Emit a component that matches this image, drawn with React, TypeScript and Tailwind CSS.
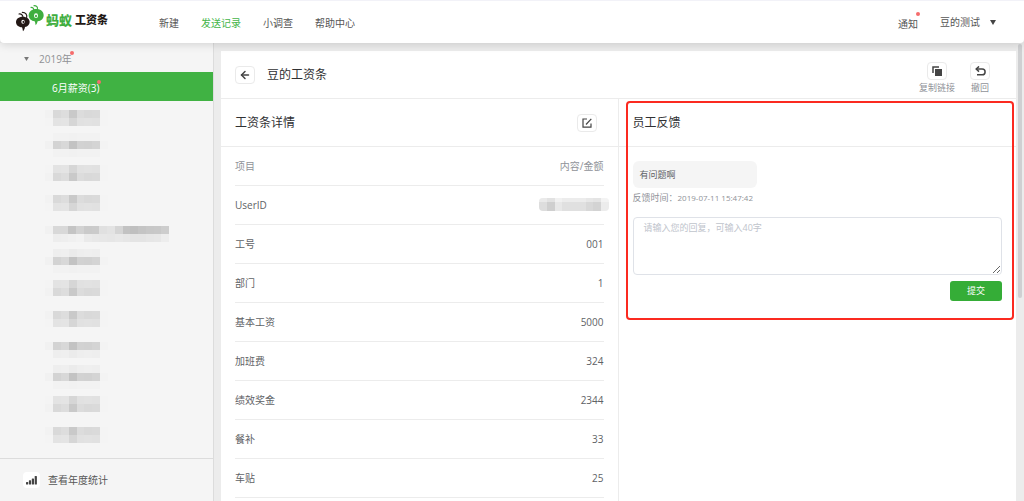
import { ArrowLeft } from "lucide-react";
import type { ReactNode } from "react";

const nav = ["新建", "发送记录", "小调查", "帮助中心"];

const items = [
	{ label: "工号", value: "001" },
	{ label: "部门", value: "1" },
	{ label: "基本工资", value: "5000" },
	{ label: "加班费", value: "324" },
	{ label: "绩效奖金", value: "2344" },
	{ label: "餐补", value: "33" },
	{ label: "车贴", value: "25" },
];

// masked names, one hex pair (grey level) per cell
const dark = "f1 d3 d8 c3 d2 d1 d4 f3";
const mid = "f2 d9 dd c9 dc d9 da f4";
const soft = "f4 e3 e4 d6 e1 e2 e1 f4";
const pale = "f5 ee ef eb ee ef ee f5";
const faint = "f5 f2 f2 f1 f2 f2 f2 f5";

const months = [
	{ pad: "pt-[9px]", rows: [mid, soft] },
	{ pad: "pt-[3px]", rows: [faint, dark, faint] },
	{ pad: "pt-[6px]", rows: [soft, mid] },
	{ pad: "pt-[7px]", rows: [mid, soft] },
	{
		pad: "pt-[9px]",
		rows: [
			"f1 d8 d8 c4 d2 ca cb e0 e3 d5 c2 bf c4 c7 c8 cd",
			"f5 ed ee f0 f2 ea e8 e7 e6 e8 e6 e4 e4 e6 e7 ed",
		],
	},
	{ pad: "pt-[3px]", rows: [pale, dark, faint] },
	{ pad: "pt-[5px]", rows: [soft, mid] },
	{ pad: "pt-[7px]", rows: [mid, soft] },
	{ pad: "pt-[9px]", rows: [dark, pale] },
	{ pad: "pt-[3px]", rows: [pale, dark, faint] },
	{ pad: "pt-[5px]", rows: [soft, mid] },
	{ pad: "pt-[7px]", rows: [mid, soft] },
];

export default function App() {
	return (
		<div className="h-screen min-h-[501px] flex flex-col overflow-hidden bg-[#ececec] text-[10px] leading-4 text-[#606266] font-['Open_Sans','Noto_Sans_CJK_SC',sans-serif]">
			<Header />
			<div className="flex-1 min-h-0 flex">
				<Sidebar />
				<main className="flex-1 min-w-0 pt-2 pl-[7px] flex">
					<section className="flex-1 min-w-0 bg-white flex flex-col">
						<TitleBar />
						<div className="flex-1 grid grid-cols-2">
							<Detail />
							<Feedback />
						</div>
					</section>
				</main>
				<div className="w-2 pt-px flex justify-center">
					<div className="w-1 h-[254px] rounded-full bg-[#cfd0d2]" />
				</div>
			</div>
		</div>
	);
}

function Header() {
	return (
		<header className="relative z-10 shrink-0 h-[43px] pl-[15px] pr-7 flex items-center bg-white border-t border-[#f2f2f8] rounded-b shadow-[0_2px_8px_rgba(0,0,0,0.13)]">
			<a href="#" className="w-36 pb-2 flex items-center">
				<Logo />
				<span className="ml-[2px] pt-1 flex items-center font-black leading-5">
					<span className="text-[13px] text-[#3fae3f]">蚂蚁</span>
					<span className="ml-[3px] text-[11px] text-[#231815]">工资条</span>
				</span>
			</a>
			<nav className="flex gap-[22px] pt-px">
				{nav.map((n) => (
					<a key={n} href="#" className={n === "发送记录" ? "text-[#44b549]" : "text-[#555]"}>
						{n}
					</a>
				))}
			</nav>
			<div className="ml-auto flex items-center gap-[22px] text-[#555]">
				<a href="#" className="relative pt-1">
					通知
					<Dot />
				</a>
				<button className="flex items-center gap-[10px]">
					豆的测试
					<svg viewBox="0 0 6 5" className="w-[6px] h-[5px]">
						<path d="M0 0h6L3 5z" fill="#444" />
					</svg>
				</button>
			</div>
		</header>
	);
}

function Sidebar() {
	return (
		<aside className="w-[214px] shrink-0 bg-[#f5f5f5] border-r border-[#dcdcdc] flex flex-col">
			<button className="h-[29px] shrink-0 pl-6 pt-[2px] flex items-center text-[#8f9194]">
				<svg viewBox="0 0 6 5" className="w-[5px] h-[4px]">
					<path d="M0 0h6L3 5z" fill="#777" />
				</svg>
				<span className="relative ml-[10px]">
					2019年
					<Dot />
				</span>
			</button>
			<button className="h-[29px] shrink-0 pl-[52px] pt-[2px] flex items-center bg-[#40b243] text-white">
				<span className="relative">
					6月薪资(3)
					<Dot />
				</span>
			</button>
			<div className="flex-1 min-h-0 overflow-hidden">
				{months.map((m, i) => (
					<button key={i} className={`h-[29px] w-full pl-[45px] flex items-start ${m.pad}`}>
						<Mosaic rows={m.rows} />
					</button>
				))}
			</div>
			<button className="h-[43px] shrink-0 pl-[23px] flex items-center gap-2 border-t border-[#dcdcdc] text-[#555]">
				<span className="w-[17px] h-4 flex items-center justify-center bg-white rounded-sm">
					<svg viewBox="0 0 11 9" className="w-[11px] h-[9px]" fill="#444">
						<rect x="0" y="6" width="2.2" height="2.6" rx=".6" />
						<rect x="2.9" y="4.2" width="2.2" height="4.4" rx=".6" />
						<rect x="5.8" y="2.4" width="2.2" height="6.2" rx=".6" />
						<rect x="8.7" y="0" width="2.2" height="8.6" rx=".6" />
					</svg>
				</span>
				查看年度统计
			</button>
		</aside>
	);
}

function TitleBar() {
	return (
		<div className="h-12 shrink-0 pl-[14px] pr-[26px] flex items-center border-b border-[#ececec]">
			<IconButton label="返回">
				<ArrowLeft className="w-3 h-3" strokeWidth={3} />
			</IconButton>
			<h1 className="ml-3 text-[12px] text-[#303133]">豆的工资条</h1>
			<div className="ml-auto pt-[8px] flex gap-[15px] text-[9px] leading-[14px] text-[#909399]">
				<div className="flex flex-col items-center gap-px">
					<IconButton label="复制链接">
						<svg viewBox="0 0 10 10" className="w-[10px] h-[10px]">
							<path d="M1 7V1h6" fill="none" stroke="#444" strokeWidth="1.5" />
							<path d="M3 3h7v7H3z" fill="#444" />
						</svg>
					</IconButton>
					<span>复制链接</span>
				</div>
				<div className="flex flex-col items-center gap-px">
					<IconButton label="撤回">
						<svg viewBox="0 0 11 10" className="w-[11px] h-[10px]" fill="none" stroke="#444" strokeWidth="1.5">
							<path d="M4 .4 1.2 3 4 5.6" />
							<path d="M1.4 3h5.8a2.9 2.9 0 0 1 0 5.8H2" />
						</svg>
					</IconButton>
					<span>撤回</span>
				</div>
			</div>
		</div>
	);
}

function Detail() {
	return (
		<div className="border-r border-[#ececec]">
			<div className="h-12 pl-[14px] pr-[21px] flex items-center justify-between border-b border-[#ececec]">
				<h2 className="text-[12px] text-[#303133]">工资条详情</h2>
				<IconButton label="编辑">
					<svg viewBox="0 0 10 10" className="w-[10px] h-[10px]" fill="none" stroke="#444" strokeWidth="1.2">
						<path d="M5 1H1v8.2h8V5.5" />
						<path d="M4 6.5 9.3.8" />
					</svg>
				</IconButton>
			</div>
			<div className="px-[14px]">
				<table className="w-full">
					<thead>
						<tr className="h-[38px] border-b border-[#ececec] text-[#909399]">
							<th className="text-left font-normal">项目</th>
							<th className="text-right font-normal">内容/金额</th>
						</tr>
					</thead>
					<tbody>
						<tr className="h-[39px] border-b border-[#ececec]">
							<td>UserID</td>
							<td>
								<div className="flex justify-end -mr-[5px]">
									<svg
										viewBox="0 0 9 13"
										preserveAspectRatio="none"
										shapeRendering="crispEdges"
										className="w-[70px] h-[13px] rounded"
									>
										{["dd", "cf", "e8", "e0", "e0", "e0", "d8", "d3", "ec"].map((c, i) => (
											<rect key={i} x={i} width="1" height="13" fill={`#${c}${c}${c}`} />
										))}
										<path d="M0 0h9v4H0z" fill="#fff" opacity=".4" />
									</svg>
								</div>
							</td>
						</tr>
						{items.map((it) => (
							<tr key={it.label} className="h-[39px] border-b border-[#ececec]">
								<td>{it.label}</td>
								<td className="text-right">{it.value}</td>
							</tr>
						))}
					</tbody>
				</table>
			</div>
		</div>
	);
}

function Feedback() {
	return (
		<div className="relative">
			<div className="h-12 px-[14px] flex items-center border-b border-[#ececec]">
				<h2 className="text-[12px] text-[#303133]">员工反馈</h2>
			</div>
			<div className="px-[14px] pt-[14px] flex flex-col">
				<p className="w-[124px] h-[27px] px-[7px] flex items-center rounded-md bg-[#f5f5f5] text-[9px]">有问题啊</p>
				<p className="mt-1 flex items-center text-[9px] leading-3 text-[#909399]">
					反馈时间：<span className="text-[8px]">2019-07-11 15:47:42</span>
				</p>
				<textarea
					aria-label="回复"
					placeholder="请输入您的回复，可输入40字"
					className="mt-[13px] h-[58px] px-[10px] py-1 rounded-sm border border-[#dfe2e8] text-[9px] leading-3 placeholder:text-[#c0c4cc] focus:outline-none"
				/>
				<button className="mt-[6px] self-end w-[52px] h-5 rounded-[3px] bg-[#35ad37] text-white text-[9px]">提交</button>
			</div>
			<div className="absolute left-[7px] right-[2px] top-[2px] h-[219px] rounded-sm border-2 border-[#fb2a20] pointer-events-none" />
		</div>
	);
}

function IconButton({ label, children }: { label: string; children: ReactNode }) {
	return (
		<button
			aria-label={label}
			className="w-5 h-[18px] flex items-center justify-center rounded-sm border border-[#eaeaea] bg-white text-[#444]"
		>
			{children}
		</button>
	);
}

function Dot() {
	return <span className="absolute -right-[2px] top-0 w-1 h-1 rounded-full bg-[#f56c6c]" />;
}

function Mosaic({ rows }: { rows: string[] }) {
	const cols = rows[0].split(" ").length;
	return (
		<svg
			viewBox={`0 0 ${cols} ${rows.length}`}
			preserveAspectRatio="none"
			shapeRendering="crispEdges"
			className={`${cols > 8 ? "w-[124px]" : "w-[63px]"} ${rows.length > 2 ? "h-6" : "h-4"}`}
		>
			{rows.map((r, y) =>
				r.split(" ").map((c, x) => <rect key={`${x}-${y}`} x={x} y={y} width="1" height="1" fill={`#${c}${c}${c}`} />),
			)}
		</svg>
	);
}

function Logo() {
	return (
		<svg viewBox="45 9 87 84" className="w-[29px] h-7">
			<g fill="none" strokeWidth="3.5" strokeLinecap="round">
				<path d="M69 50c0-8-5-12-12-11M80 50c2-9-3-16-13-16" stroke="#231815" />
				<path d="M101 28c1-6-2-9-8-9M112 26c2-8-2-12-10-12" stroke="#3fae3f" />
			</g>
			<path d="M68 47c13 0 21 7 21 16 0 8-6 14-14 15-1 6-3 10-6 13-1-4-1-8-3-12-11-1-18-7-18-16s8-16 20-16z" fill="#231815" />
			<ellipse cx="69" cy="62" rx="5" ry="6" fill="#fff" />
			<ellipse cx="70" cy="63" rx="2.5" ry="3.5" fill="#231815" />
			<path d="M109 24c13 0 22 8 22 19 0 10-7 17-18 18-1 5-3 9-6 12-1-4-1-8-3-12-10-1-18-8-18-18 0-11 10-19 23-19z" fill="#3fae3f" />
			<ellipse cx="108" cy="44" rx="6" ry="7" fill="#fff" />
			<ellipse cx="108" cy="45" rx="3" ry="4" fill="#3fae3f" />
		</svg>
	);
}
